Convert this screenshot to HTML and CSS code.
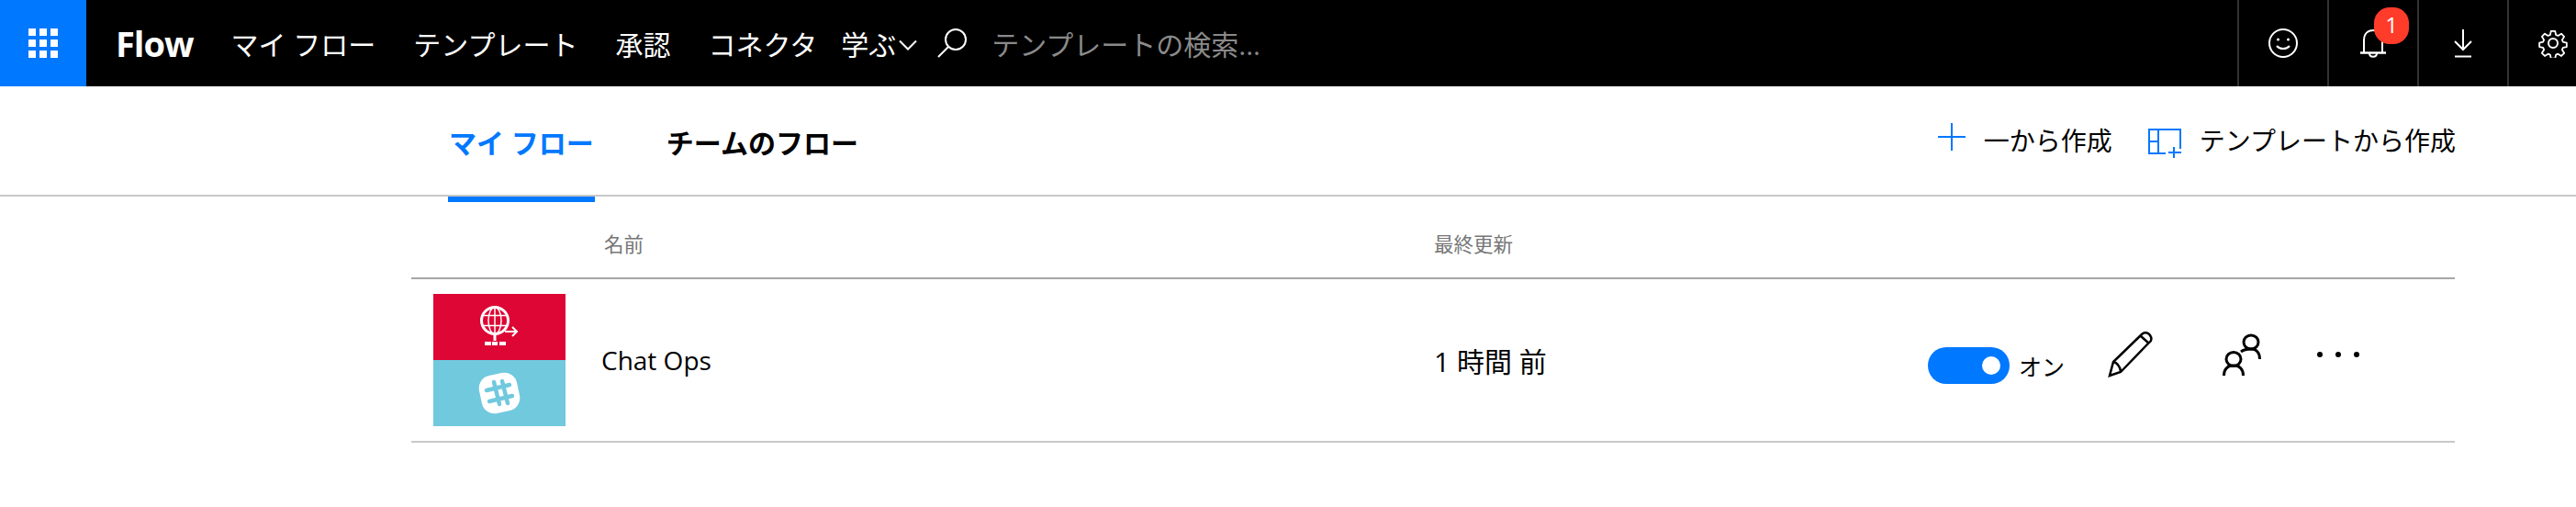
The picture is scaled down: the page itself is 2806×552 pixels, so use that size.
FILE: index.html

```html
<!DOCTYPE html>
<html lang="ja">
<head>
  <meta charset="UTF-8" />
  <meta name="viewport" content="width=device-width, initial-scale=1.0" />
  <title>マイ フロー</title>
  <link rel="stylesheet" href="styles.css">
</head>
<body>
  <header class="topbar">
    <a class="waffle" href="#">
      <span></span><span></span><span></span>
      <span></span><span></span><span></span>
      <span></span><span></span><span></span>
    </a>
    <a class="brand" href="#">Flow</a>
    <nav class="nav">
      <a href="#">マイ フロー</a>
      <a href="#">テンプレート</a>
      <a href="#">承認</a>
      <a href="#">コネクタ</a>
      <a class="nav-learn" href="#">学ぶ
        <svg class="chevron" width="20" height="12" viewBox="0 0 20 12"><path d="M1 1.500l9 9 9-9" fill="none" stroke="#fff" stroke-width="2"/></svg>
      </a>
    </nav>
    <div class="search">
      <svg width="34" height="34" viewBox="0 0 34 34"><circle cx="21" cy="13" r="11" fill="none" stroke="#fff" stroke-width="2"/><path d="M13 21L2 32" fill="none" stroke="#fff" stroke-width="2"/></svg>
      <span class="search-text">テンプレートの検索...</span>
    </div>
    <div class="tools">
      <button class="tool">
        <svg width="34" height="34" viewBox="0 0 34 34" fill="none" stroke="#fff" stroke-width="2"><circle cx="17" cy="17" r="15"/><path d="M10 20c3.500 4 10.500 4 14 0"/><circle cx="11.500" cy="13" r="1.500" fill="#fff" stroke="none"/><circle cx="22.500" cy="13" r="1.500" fill="#fff" stroke="none"/></svg>
      </button>
      <button class="tool">
        <svg width="30" height="34" viewBox="0 0 30 34" fill="none" stroke="#fff" stroke-width="2"><path d="M5 27V14C5 7 9 3 15 3s10 4 10 11v13"/><path d="M1 27.500h28" stroke-width="2.500"/><path d="M11 28c0 5 8 5 8 0"/></svg>
        <span class="badge">1</span>
      </button>
      <button class="tool">
        <svg width="20" height="32" viewBox="0 0 20 32" fill="none" stroke="#fff" stroke-width="2"><path d="M10 1v22"/><path d="M1 14l9 9 9-9"/><path d="M1 30.500h18"/></svg>
      </button>
      <button class="tool">
        <svg width="32" height="32" viewBox="0 0 32 32" fill="none" stroke="#fff" stroke-width="2" stroke-linejoin="round"><circle cx="16" cy="16" r="5"/><path d="M13.500 1.500h5l1 4.500 2.500 1 4-2.500 3.500 3.500-2.500 4 1 2.500 4.500 1v5l-4.500 1-1 2.500 2.500 4-3.500 3.500-4-2.500-2.500 1-1 4.500h-5l-1-4.500-2.500-1-4 2.500-3.500-3.500 2.500-4-1-2.500-4.500-1v-5l4.500-1 1-2.500-2.500-4 3.500-3.500 4 2.500 2.500-1z" transform="translate(1.600 1.600) scale(.9)"/></svg>
      </button>
    </div>
  </header>

  <div class="subbar">
    <div class="tabs">
      <a class="tab active" href="#">マイ フロー</a>
      <a class="tab" href="#">チームのフロー</a>
    </div>
    <div class="actions">
      <a class="action" href="#">
        <svg width="30" height="30" viewBox="0 0 30 30" fill="none" stroke="#0078ff" stroke-width="2"><path d="M15 0v30M0 15h30"/></svg>
        <span>一から作成</span>
      </a>
      <a class="action action-template" href="#">
        <svg width="38" height="33" viewBox="0 0 38 33" fill="none" stroke="#0078ff" stroke-width="2"><path d="M19 27H1V1h34v21"/><path d="M11 1v26M1 14h10"/><path d="M28 32V20M22 26h14"/></svg>
        <span>テンプレートから作成</span>
      </a>
    </div>
  </div>

  <main class="list">
    <div class="list-head">
      <div></div>
      <div>名前</div>
      <div>最終更新</div>
    </div>
    <div class="flow-row">
      <div class="thumb">
        <div class="thumb-top">
          <svg width="42" height="46" viewBox="0 0 42 46" fill="none" stroke="#fff">
            <circle cx="16" cy="16" r="14.500" stroke-width="3"/>
            <ellipse cx="16" cy="16" rx="7" ry="14.500" stroke-width="1.500"/>
            <path d="M3 10.500h26M3 21.500h26M16 2v28" stroke-width="1.500"/>
            <path d="M16 31v7" stroke-width="3"/>
            <path d="M5 41h7M13 41h6M21 41h7" stroke-width="4"/>
            <path d="M27 28h13M35 23l5 5-5 5" stroke-width="2"/>
          </svg>
        </div>
        <div class="thumb-bottom">
          <svg width="46" height="46" viewBox="0 0 46 46">
            <rect x="2" y="2" width="42" height="42" rx="14" fill="#fff" transform="rotate(-12 23 23)"/>
            <path d="M18 11l6 24M27 10l6 24M10 20l25-6M13 32l25-6" fill="none" stroke="#71c9de" stroke-width="4.500" stroke-linecap="round" transform="translate(-1 0)"/>
          </svg>
        </div>
      </div>
      <div class="flow-name">Chat Ops</div>
      <div class="flow-time">1 時間 前</div>
      <div class="flow-controls">
        <span class="toggle"><span class="knob"></span></span>
        <span class="toggle-label">オン</span>
        <a class="icon-btn icon-edit" href="#">
          <svg width="50" height="50" viewBox="0 0 50 50" fill="none" stroke="#000" stroke-width="2.500"><path d="M2 48l4-15L37 3c3-3 7-2 9 1s2 6-1 8L14 44z"/><path d="M36 5l9 8"/><path d="M6 33c4 1 7 5 8 10"/></svg>
        </a>
        <a class="icon-btn icon-share" href="#">
          <svg width="42" height="46" viewBox="0 0 42 46" fill="none" stroke="#000" stroke-width="3"><ellipse cx="12" cy="28" rx="8" ry="7.500"/><path d="M1.500 46c0-7 4-11 10.500-11s10.500 4 10.500 11"/><ellipse cx="31" cy="9.500" rx="8" ry="7.500"/><path d="M20 20c2.500-2 6-3 11-3 6 0 9.500 4 9.500 11"/></svg>
        </a>
        <a class="icon-btn icon-more" href="#"><i></i><i></i><i></i></a>
      </div>
    </div>
  </main>
</body>
</html>
```

FILE: styles.css

```css
body {
  margin: 0;
  background: #fff;
  color: #000;
  font-family: "Open Sans", "Noto Sans CJK JP", sans-serif;
  font-size: 28px;
}
a {
  color: inherit;
  text-decoration: none;
}
.topbar {
  display: flex;
  align-items: center;
  height: 94px;
  background: #000;
  color: #fff;
  font-size: 30px;
}
.waffle {
  display: grid;
  grid-template-columns: repeat(3, 8px);
  grid-auto-rows: 8px;
  gap: 4px;
  align-content: center;
  justify-content: center;
  width: 94px;
  height: 94px;
  background: #0078ff;
}
.waffle span {
  background: #fff;
}
.brand {
  margin-left: 32px;
  font-size: 38px;
  font-weight: 700;
  letter-spacing: -1px;
}
.nav {
  display: flex;
  align-items: center;
  gap: 41px;
  margin-left: 41px;
}
.nav-learn {
  display: flex;
  align-items: center;
  margin-left: -15px;
}
.chevron {
  margin-left: 3px;
  margin-top: 4px;
}
.search {
  display: flex;
  align-items: center;
  gap: 26px;
  margin-left: 21px;
}
.search-text {
  color: #8a8a8a;
}
.tools {
  display: flex;
  margin-left: auto;
  margin-right: -23px;
}
.tool {
  position: relative;
  display: flex;
  align-items: center;
  justify-content: center;
  width: 98px;
  height: 94px;
  padding: 0;
  background: none;
  border: none;
  border-left: 2px solid #333;
}
.badge {
  position: absolute;
  top: 8px;
  left: 49px;
  width: 38px;
  height: 40px;
  border-radius: 17px;
  background: #ff3b2a;
  color: #fff;
  font-family: "Open Sans", sans-serif;
  font-size: 24px;
  line-height: 38px;
  text-align: center;
}
.subbar {
  display: flex;
  justify-content: space-between;
  height: 118px;
  margin-bottom: 2px;
  padding: 0 131px 0 488px;
  box-shadow: 0 2px 0 #c8c8c8;
}
.tabs {
  display: flex;
  gap: 77px;
  font-size: 30px;
}
.tab {
  position: relative;
  padding: 38px 1px 0;
  font-weight: 700;
}
.tab.active {
  color: #0078ff;
}
.tab.active::after {
  content: "";
  position: absolute;
  left: 0;
  right: 0;
  top: 120px;
  height: 6px;
  background: #0078ff;
}
.actions {
  display: flex;
  gap: 39px;
  padding-top: 38px;
}
.action {
  display: flex;
  align-items: flex-start;
  gap: 20px;
}
.action svg {
  margin-top: 2px;
}
.action-template {
  gap: 18px;
}
.action-template svg {
  margin-top: 8px;
}
.list {
  margin-left: 448px;
  width: 2226px;
}
.list-head,
.flow-row {
  display: grid;
  grid-template-columns: 210px 904px 538px 1fr;
  align-items: center;
}
.list-head {
  height: 76px;
  padding-top: 12px;
  border-bottom: 2px solid #a6a6a6;
  color: #767676;
  font-size: 21.500px;
}
.flow-row {
  height: 176px;
  border-bottom: 2px solid #c8c8c8;
}
.thumb {
  width: 144px;
  margin-left: 24px;
}
.thumb-top,
.thumb-bottom {
  display: flex;
  align-items: center;
  justify-content: center;
  height: 72px;
}
.thumb-top {
  background: #dd0635;
}
.thumb-bottom {
  background: #71c9de;
}
.flow-name {
  margin-left: -3px;
}
.flow-time {
  font-size: 30px;
}
.flow-controls {
  display: flex;
  align-items: center;
}
.toggle {
  display: flex;
  align-items: center;
  justify-content: flex-end;
  width: 89px;
  height: 40px;
  margin-top: 12px;
  padding-right: 10px;
  box-sizing: border-box;
  border-radius: 20px;
  background: #0078ff;
}
.knob {
  width: 20px;
  height: 20px;
  border-radius: 50%;
  background: #fff;
}
.toggle-label {
  margin: 12px 0 0 10px;
  font-size: 25px;
}
.icon-btn {
  display: flex;
  align-items: center;
  margin-bottom: 12px;
}
.icon-edit {
  margin-left: 47px;
}
.icon-share {
  margin-left: 75px;
}
.icon-more {
  gap: 14px;
  margin-left: 61px;
  margin-bottom: 12px;
}
.icon-more i {
  width: 6px;
  height: 6px;
  border-radius: 50%;
  background: #000;
}
```
